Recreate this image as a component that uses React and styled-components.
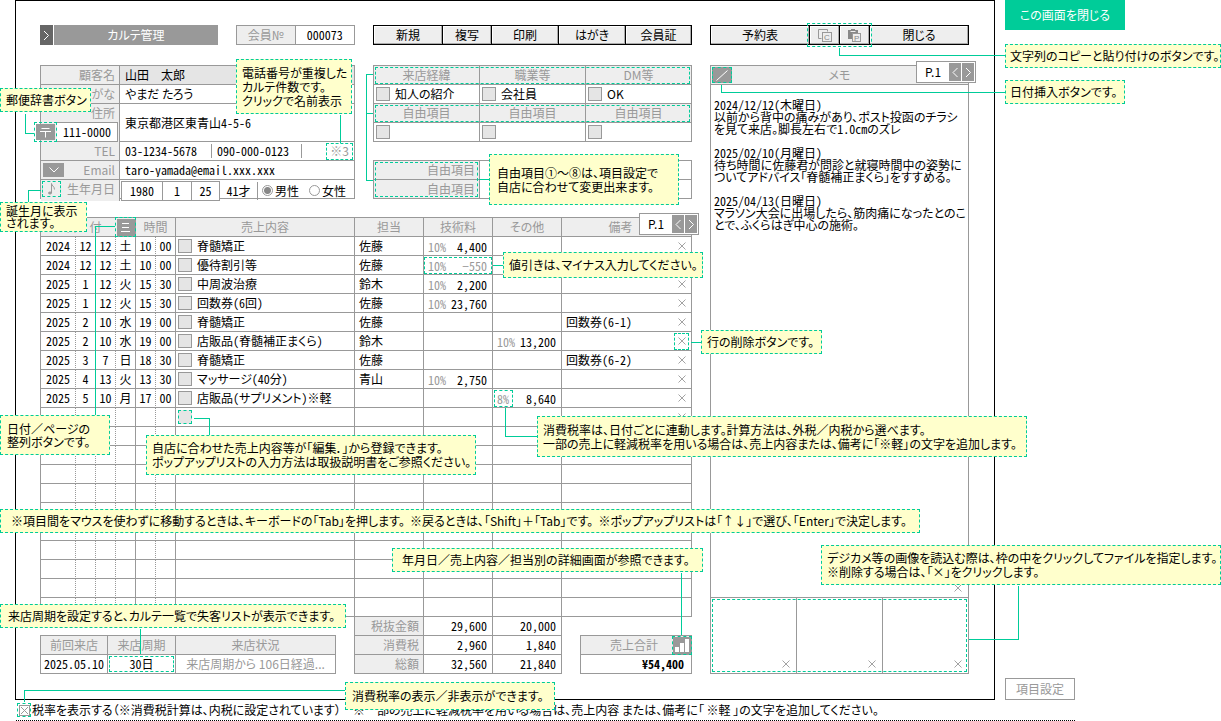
import React from 'react';
import styled, { createGlobalStyle, css } from 'styled-components';

const GlobalStyle = createGlobalStyle`
  :root{
    --line:#999999;
    --label:#eeeeee;
    --fill:#e5e5e5;
    --mark:#00cc99;
    --note:#ffffcc;
  }

  *{
    box-sizing:border-box;
  }

  body{
    margin:0;
    background:#fff;
  }

  body, button, input, textarea{
    color:#000;
    font-family:"Noto Sans CJK JP", "Liberation Sans", sans-serif;
    font-size:12px;
    line-height:14px;
    font-feature-settings:"palt" 1;
  }

  button, input, textarea{
    margin:0;
    padding:0;
    border:none;
    border-radius:0;
    background:none;
    outline:none;
  }

  button{
    cursor:pointer;
  }
`;

/* half width figures, so that columns of numbers line up */
const figures = css`
  font-feature-settings:"palt" 1, "hwid" 1;
`;

/* page */

const Page = styled.div`
  display:grid;
  grid-template-columns:minmax(0, 1fr) 216px;
  column-gap:10px;
  padding-left:15px;
`;

const Frame = styled.main`
  display:grid;
  grid-template-columns:minmax(0, 652fr) minmax(0, 259fr);
  column-gap:18px;
  padding:24px 25px 25px 24px;
  border:1px solid #000;
`;

const Column = styled.div`
  display:flex;
  flex-direction:column;
`;

const Pair = styled.div`
  display:grid;
  grid-template-columns:minmax(0, 315fr) minmax(0, 319fr);
  column-gap:18px;
  margin-bottom:${(p) => p.$gap}px;
`;

const Side = styled.aside`
  display:flex;
  flex-direction:column;
  align-items:flex-start;
`;

/* notes laid over the form */

const NoteBox = styled.div`
  display:flex;
  align-items:center;
  width:${(p) => p.$width}px;
  min-height:24px;
  padding:${(p) => p.$pad || '4px 6px'};
  border:1px dashed var(--mark);
  background-color:var(--note);
  line-height:${(p) => p.$leading || 14}px;
  white-space:pre;
`;

const at = css`
  position:absolute;
  z-index:3;
  top:${(p) => p.$top}px;
  ${(p) => (p.$right !== undefined ? `right:${p.$right}px;` : `left:${p.$left}px;`)}
`;

const FloatingBox = styled(NoteBox)`
  ${at}
  height:${(p) => p.$height}px;
`;

const Wide = styled.span`
  font-feature-settings:normal;
`;

const Wire = styled.span`
  ${at}
  z-index:2;
  width:${(p) => p.$w || 1}px;
  height:${(p) => p.$h || 1}px;
  border:0 solid var(--mark);
  ${(p) => p.$sides.split(' ').map((side) => `border-${side}-width:1px;`).join('')}
  pointer-events:none;
`;

const Spot = styled.span`
  position:absolute;
  z-index:1;
  inset:${(p) => p.$inset || '1px'};
  border:1px dashed var(--mark);
  pointer-events:none;
`;

/* header */

const TitleBar = styled.div`
  display:flex;
  height:20px;
`;

const OpenButton = styled.button`
  display:grid;
  place-items:center;
  width:13px;
  margin-right:1px;
  background-color:#666;
`;

const Title = styled.h1`
  flex:1;
  margin:0 18px 0 0;
  background-color:#999;
  color:#fff;
  font-size:12px;
  font-weight:400;
  line-height:20px;
  text-align:center;
`;

const MemberNo = styled.label`
  display:grid;
  grid-template-columns:1fr 1fr;
  width:119px;
  border:1px solid var(--line);
  line-height:18px;
  text-align:center;

  span{
    border-right:1px solid var(--line);
    background-color:var(--label);
    color:#999;
  }

  input{
    ${figures}
    width:100%;
    text-align:center;
  }
`;

const Toolbar = styled.div`
  position:relative;
  display:grid;
  grid-template-columns:${(p) => p.$cols};
  height:20px;
  border:1px solid #000;
`;

const ToolButton = styled.button`
  display:grid;
  place-items:center;
  background-color:var(--label);
  box-shadow:inset -1px -1px 0 #aaa, inset 1px 1px 0 #fff;

  & + &{
    border-left:1px solid #000;
  }
`;

/* customer form */

const Form = styled.form`
  position:relative;
  border:1px solid var(--line);
  border-bottom:none;
`;

const Row = styled.div`
  display:grid;
  grid-template-columns:79px minmax(0, 1fr);
  height:${(p) => (p.$tall ? 38 : 19)}px;
  border-bottom:1px solid var(--line);
`;

const Label = styled.div`
  position:relative;
  padding-right:4px;
  border-right:1px solid var(--line);
  background-color:var(--label);
  color:#999;
  line-height:18px;
  text-align:right;
`;

const Field = styled.div`
  position:relative;
  display:flex;
  align-items:center;
  background-color:${(p) => (p.$filled ? 'var(--fill)' : 'transparent')};
`;

const TextBox = styled.input`
  width:${(p) => (p.$width ? `${p.$width}px` : '100%')};
  height:14px;
  padding-left:5px;
  border-right:${(p) => (p.$ruled ? '1px solid var(--line)' : 'none')};
  ${(p) => p.$figures && figures}
`;

const ZipBox = styled.div`
  display:flex;
  height:20px;
  margin:0 -3px 0 -7px;

  input{
    ${figures}
    flex:1;
    min-width:0;
    border:1px solid var(--line);
    border-left:none;
    background-color:#fff;
    text-align:center;
  }
`;

const ZipButton = styled.button`
  display:grid;
  place-items:center;
  width:23px;
  height:20px;
  padding:1px;
  border:1px dashed var(--mark);
  background-color:#999;
  background-clip:content-box;
`;

const IconButton = styled.button`
  display:grid;
  place-items:center;
  flex:none;
  width:${(p) => p.$width}px;
  height:${(p) => p.$height}px;
  margin:${(p) => p.$margin || 0};
  background-color:${(p) => (p.$plain ? 'transparent' : '#999')};
  color:${(p) => (p.$plain ? '#999' : '#fff')};
`;

const Corner = styled.div`
  position:absolute;
  top:1px;
  left:1px;
  display:flex;
`;

const Duplicate = styled.button`
  position:relative;
  width:27px;
  height:17px;
  margin:0 1px 0 auto;
  color:#999;
`;

const Birthday = styled.div`
  position:relative;
  z-index:1;
  align-self:flex-start;
  display:grid;
  grid-template-columns:40px 29px 28px;
  flex:none;
  height:20px;
  margin:1px 0 0 1px;
  border:1px solid var(--line);
  background-color:#fff;

  input{
    ${figures}
    width:100%;
    min-width:0;
    text-align:center;
  }

  input + input{
    border-left:1px solid var(--line);
  }
`;

const Age = styled.span`
  ${figures}
  width:38px;
  height:18px;
  border-right:1px solid var(--line);
  line-height:17px;
  text-align:center;
`;

const Radio = styled.label`
  display:flex;
  align-items:center;
  gap:2px;
  margin-left:${(p) => p.$gap}px;
  white-space:nowrap;

  input{
    appearance:none;
    width:11px;
    height:11px;
    border:1px solid #999;
    border-radius:50%;
  }

  input:checked{
    background:radial-gradient(circle, #888 3px, #fff 4px);
  }
`;

/* free items */

const Stack = styled.div`
  position:relative;
  display:flex;
  flex-direction:column;
  justify-content:space-between;
`;

const Table = styled.table`
  width:100%;
  border:solid var(--line);
  border-width:${(p) => (p.$joined ? '0 0 0 1px' : '1px 0 0 1px')};
  border-spacing:0;
  table-layout:fixed;
  ${(p) => p.$figures && figures}

  tr{
    height:19px;
  }

  th, td{
    height:19px;
    padding:0;
    border:solid var(--line);
    border-width:0 1px 1px 0;
    line-height:18px;
    white-space:nowrap;
  }

  th{
    background-color:var(--label);
    color:#999;
    font-weight:400;
  }
`;

const Spotted = styled.div`
  position:relative;
`;

const Choice = styled.div`
  display:flex;
  align-items:center;
  gap:5px;
  height:18px;
  padding-left:2px;
`;

const PopupButton = styled.button`
  flex:none;
  width:14px;
  height:14px;
  border:1px ${(p) => (p.$marked ? 'dashed var(--mark)' : 'solid var(--line)')};
  background-color:var(--fill);
`;

const RightTh = styled.th`
  padding-right:4px !important;
  text-align:right;
`;

/* ledger */

const Ledger = styled.section`
  position:relative;
`;

const Cell = styled.td`
  text-align:${(p) => p.$align || 'center'};
  border-right-style:${(p) => (p.$dotted ? 'dotted' : 'solid')} !important;
`;

const SortTh = styled.th`
  position:relative;

  button{
    margin:auto;
  }
`;

const DateTh = styled.th`
  padding-left:10px !important;
  border-right:none !important;
  font-feature-settings:normal;
`;

const RemarkTh = styled.th`
  padding-right:12px !important;
`;

const Indent = styled.span`
  padding-left:4px;
`;

const Amount = styled.div`
  display:flex;
  justify-content:space-between;
  height:17px;
  padding:0 4px 0 3px;
  border:1px dashed ${(p) => (p.$marked ? 'var(--mark)' : 'transparent')};
  color:${(p) => (p.$marked ? '#999' : '#000')};
  line-height:15px;
`;

const Rate = styled.span`
  position:relative;
  color:#999;
`;

const Remark = styled.div`
  position:relative;
  display:flex;
  align-items:center;
  justify-content:space-between;
  height:18px;
  padding:0 5px 0 4px;
`;

const Delete = styled.button`
  position:relative;
  display:grid;
  place-items:center;
  width:9px;
  height:9px;
  margin-left:auto;
`;

const PagerBox = styled.nav`
  ${at}
  z-index:2;
  display:flex;
  gap:1px;
  width:60px;
  height:22px;
  padding:1px;
  border:1px solid var(--line);
  background-color:#fff;
  color:#000;
  line-height:18px;
  text-align:center;

  span{
    flex:1;
  }

  button{
    display:grid;
    place-items:center;
    width:12px;
    background-color:#999;
  }
`;

const Summary = styled.section`
  position:relative;
  display:grid;
  grid-template-columns:minmax(0, 1fr) 208px 112px;
  column-gap:18px;
  align-items:end;
`;

const Figure = styled.td`
  padding-right:${(p) => (p.$total ? 7 : 5)}px !important;
  font-weight:${(p) => (p.$total ? 700 : 400)};
  text-align:right;
`;

const Centered = styled.td`
  position:relative;
  text-align:center;

  input{
    ${figures}
    width:100%;
    text-align:center;
  }
`;

const Status = styled(Centered)`
  color:#999;
  font-feature-settings:"palt" 1;
`;

const TotalHead = styled.div`
  display:flex;
  align-items:center;
  height:18px;
  padding-left:14px;

  span:first-child{
    flex:1;
  }
`;

const ChartButton = styled(IconButton)`
  position:relative;
`;

/* memo */

const Memo = styled.section`
  position:relative;
  display:flex;
  flex:1;
  flex-direction:column;
  margin-top:20px;
  border:1px solid var(--line);
`;

const MemoHead = styled.div`
  position:relative;
  height:19px;
  border-bottom:1px solid var(--line);
  background-color:var(--label);
  color:#999;
  line-height:18px;
  text-align:center;
`;

const MemoText = styled.textarea`
  ${figures}
  flex:1;
  padding:14px 0 0 3px;
  line-height:12px;
  white-space:pre;
  overflow:hidden;
  resize:none;
`;

const MemoFoot = styled.div`
  display:flex;
  align-items:center;
  height:19px;
  padding-right:6px;
  border-bottom:1px solid var(--line);
`;

const Photos = styled.div`
  position:relative;
  display:grid;
  grid-template-columns:minmax(0, 85fr) minmax(0, 86fr) minmax(0, 86fr);
  height:75px;
`;

const Photo = styled.div`
  display:flex;
  align-items:flex-end;
  padding:0 6px 5px 0;

  & + &{
    border-left:1px solid var(--line);
  }
`;

/* right side and footer */

const CloseScreen = styled.button`
  width:120px;
  height:30px;
  margin-bottom:14px;
  background-color:var(--mark);
  color:#fff;
`;

const SideNotes = styled.div`
  display:flex;
  flex-direction:column;
  gap:12px;
`;

const Settings = styled.button`
  width:70px;
  height:22px;
  margin-top:auto;
  border:1px solid var(--line);
  color:#999;
`;

const Footer = styled.footer`
  position:relative;
  display:flex;
  align-items:center;
  height:21px;
  margin:0 146px 0 16px;
  border-bottom:1px dotted #000;

  label{
    display:flex;
    align-items:center;
    gap:1px;
    padding-left:1px;
    white-space:pre;
  }
`;

const TaxCheck = styled.span`
  position:relative;
  display:grid;
  place-items:center;
  width:14px;
  height:14px;
  border:1px dashed var(--mark);

  input{
    position:absolute;
    inset:0;
    width:100%;
    height:100%;
    opacity:0;
  }
`;

/* drawings */

const Arrow = ({ back, color = '#fff' }) => (
  <svg width="7" height="11" viewBox="0 0 7 11" fill="none" stroke={color}>
    <path d={back ? 'M5.5 1 1 5.5 5.5 10' : 'M1 1 5.5 5.5 1 10'} />
  </svg>
);

const Cross = () => (
  <svg width="8" height="8" viewBox="0 0 8 8" stroke="#999" strokeWidth="0.9">
    <path d="M.5 .5 7.5 7.5M7.5 .5 .5 7.5" />
  </svg>
);

const CopyIcon = () => (
  <svg width="14" height="13" viewBox="0 0 14 13" fill="none" stroke="#999">
    <path d="M3.5 9.5h-3v-9h9v2" />
    <rect x="4.5" y="3.5" width="9" height="9" fill="#eee" />
    <text x="6" y="11" fontSize="8" fill="#888" stroke="none" fontFamily="Liberation Sans">C</text>
  </svg>
);

const PasteIcon = () => (
  <svg width="14" height="13" viewBox="0 0 14 13" fill="none" stroke="#999">
    <path d="M0 1h3v-1h4v1h3v9H0z" fill="#888" stroke="none" />
    <path d="M2.5 2.5h5" stroke="#eee" />
    <rect x="4.5" y="4.5" width="8" height="8" fill="#eee" />
    <text x="6" y="12" fontSize="8" fill="#888" stroke="none" fontFamily="Liberation Sans">P</text>
  </svg>
);

const PostMark = () => (
  <svg width="11" height="11" viewBox="0 0 11 11" stroke="#fff">
    <path d="M1.5 1.5h8M0 4.5h11M5.5 4.5v6" />
  </svg>
);

const DownMark = () => (
  <svg width="10" height="6" viewBox="0 0 10 6" fill="none" stroke="#fff">
    <path d="M.5 .5 5 5 9.5 .5" />
  </svg>
);

const NoteMark = () => (
  <svg width="8" height="12" viewBox="0 0 8 12" fill="none" stroke="#999">
    <path d="M3.5 10V.5C3.5 3 6.5 3 6.5 6.5" />
    <ellipse cx="2" cy="10" rx="1.5" ry="1" fill="#999" />
  </svg>
);

const ListMark = () => (
  <svg width="9" height="9" viewBox="0 0 9 9" stroke="#fff">
    <path d="M1 .5h7M1 4.5h7M0 8.5h9" />
  </svg>
);

const PenMark = () => (
  <svg width="12" height="11" viewBox="0 0 12 11" stroke="#fff">
    <path d="M.5 10.5 11.5 .5" />
  </svg>
);

const ChartMark = () => (
  <svg width="14" height="13" viewBox="0 0 14 13" fill="#fff">
    <path d="M0 8h4v5H0zM5 4h4v9H5zM10 0h4v13h-4z" />
  </svg>
);

const BoxCross = () => (
  <svg width="11" height="11" viewBox="0 0 11 11" fill="none" stroke="#999">
    <rect x=".5" y=".5" width="10" height="10" />
    <path d="M2 2 9 9M9 2 2 9" />
  </svg>
);

/* data */

const sales = [
  ['2024', '12', '12', '土', '10', '00', '脊髄矯正', '佐藤', ['10%', '4,400'], null, ''],
  ['2024', '12', '12', '土', '10', '00', '優待割引等', '佐藤', ['10%', '−550', 'all'], null, ''],
  ['2025', '1', '12', '火', '15', '30', '中周波治療', '鈴木', ['10%', '2,200'], null, ''],
  ['2025', '1', '12', '火', '15', '30', '回数券（6回）', '佐藤', ['10%', '23,760'], null, ''],
  ['2025', '2', '10', '水', '19', '00', '脊髄矯正', '佐藤', null, null, '回数券（6-1）'],
  ['2025', '2', '10', '水', '19', '00', '店販品（脊髄補正まくら）', '鈴木', null, ['10%', '13,200'], '', true],
  ['2025', '3', '7', '日', '18', '30', '脊髄矯正', '佐藤', null, null, '回数券（6-2）'],
  ['2025', '4', '13', '火', '13', '30', 'マッサージ（40分）', '青山', ['10%', '2,750'], null, ''],
  ['2025', '5', '10', '月', '17', '00', '店販品（サプリメント）※軽', '', null, ['8%', '8,640', 'rate'], ''],
];

const emptyRows = Array.from({ length: 11 }, (_, i) => i);

const columns = [35, 20, 20, 20, 20, 20, null, 69, 69, 69, 130];

const memo = `2024/12/12（木曜日）
以前から背中の痛みがあり、ポスト投函のチラシ
を見て来店。脚長左右で1.0cmのズレ

2025/02/10（月曜日）
待ち時間に佐藤君が問診と就寝時間中の姿勢に
ついてアドバイス「脊髄補正まくら」をすすめる。

2025/04/13（日曜日）
マラソン大会に出場したら、筋肉痛になったとのこ
とで、ふくらはぎ中心の施術。`;

// slash and wave keep their full width inside a note
const NoteText = ({ children }) => (
  <span>
    {children.split(/([／～])/).map((part, i) => (i % 2 ? <Wide key={i}>{part}</Wide> : part))}
  </span>
);

const Note = ({ children, ...rest }) => (
  <NoteBox {...rest}><NoteText>{children}</NoteText></NoteBox>
);

const FloatingNote = ({ children, ...rest }) => (
  <FloatingBox {...rest}><NoteText>{children}</NoteText></FloatingBox>
);

const Pager = (props) => (
  <PagerBox {...props}>
    <span>P.1</span>
    <button aria-label="前のページ"><Arrow back /></button>
    <button aria-label="次のページ"><Arrow /></button>
  </PagerBox>
);

const Price = ({ value }) =>
  value && (
    <Amount $marked={value[2] === 'all'}>
      <Rate>
        {value[0]}
        {value[2] === 'rate' && <Spot $inset="-1px -4px -1px -3px" />}
      </Rate>
      <span>{value[1]}</span>
    </Amount>
  );

function CustomerForm() {
  return (
    <Form>
      <Row>
        <Label as="label" htmlFor="name">顧客名</Label>
        <Field $filled><TextBox id="name" defaultValue="山田　太郎" /></Field>
      </Row>
      <Row>
        <Label as="label" htmlFor="kana">ふりがな</Label>
        <Field><TextBox id="kana" defaultValue="やまだ たろう" /></Field>
      </Row>
      <Row $tall>
        <Label>
          <label htmlFor="address">住所</label>
          <ZipBox>
            <ZipButton type="button" aria-label="郵便辞書"><PostMark /></ZipButton>
            <input aria-label="郵便番号" defaultValue="111-0000" />
          </ZipBox>
        </Label>
        <Field><TextBox id="address" $figures defaultValue="東京都港区東青山4-5-6" /></Field>
      </Row>
      <Row>
        <Label as="label" htmlFor="tel">TEL</Label>
        <Field>
          <TextBox id="tel" $figures $width={92} $ruled defaultValue="03-1234-5678" />
          <TextBox aria-label="携帯" $figures $width={90} $ruled defaultValue="090-000-0123" />
          <Duplicate type="button">※3<Spot $inset="0" /></Duplicate>
        </Field>
      </Row>
      <Row>
        <Label>
          <Corner>
            <IconButton type="button" aria-label="メール" $width={21} $height={14} $margin="1px"><DownMark /></IconButton>
          </Corner>
          <label htmlFor="email">Email</label>
        </Label>
        <Field><TextBox id="email" $figures defaultValue="taro-yamada@email.xxx.xxx" /></Field>
      </Row>
      <Row>
        <Label>
          <Corner>
            <IconButton type="button" aria-label="誕生月" $plain $width={19} $height={16}><NoteMark /></IconButton>
            <Spot $inset="0" />
          </Corner>
          生年月日
        </Label>
        <Field>
          <Birthday>
            <input aria-label="年" defaultValue="1980" />
            <input aria-label="月" defaultValue="1" />
            <input aria-label="日" defaultValue="25" />
          </Birthday>
          <Age>41才</Age>
          <Radio $gap={4}><input type="radio" name="sex" defaultChecked />男性</Radio>
          <Radio $gap={10}><input type="radio" name="sex" />女性</Radio>
        </Field>
      </Row>

      <FloatingNote $left={-41} $top={22} $width={91} $height={24} $pad="4px 5px">郵便辞書ボタン</FloatingNote>
      <Wire $left={-16} $top={48} $w={9} $h={20} $sides="left bottom" />
      <FloatingNote $right={2} $top={-7} $width={116} $height={55} $pad="4px 5px">
        {'電話番号が重複した\nカルテ件数です。\nクリックで名前表示'}
      </FloatingNote>
      <Wire $right={13} $top={49} $h={28} $sides="left" />
      <FloatingNote $left={-41} $top={136} $width={87} $height={30} $leading={12} $pad="4px 5px">
        {'誕生月に表示\nされます。'}
      </FloatingNote>
      <Wire $left={-13} $top={124} $w={13} $h={12} $sides="left top" />
    </Form>
  );
}

function FreeItems() {
  return (
    <Stack>
      <Spotted>
        <Table>
          <tbody>
            <tr><th>来店経緯</th><th>職業等</th><th>DM等</th></tr>
            <tr>
              {['知人の紹介', '会社員', 'OK'].map((text) => (
                <td key={text}><Choice><PopupButton aria-label="選択" />{text}</Choice></td>
              ))}
            </tr>
            <tr><th>自由項目</th><th>自由項目</th><th>自由項目</th></tr>
            <tr>
              {[1, 2, 3].map((n) => (
                <td key={n}><Choice><PopupButton aria-label="選択" /></Choice></td>
              ))}
            </tr>
          </tbody>
        </Table>
        <Spot $inset="2px 2px 58px 2px" />
        <Spot $inset="40px 2px 20px 2px" />
      </Spotted>
      <Spotted>
        <Table>
          <colgroup><col width="106" /><col /></colgroup>
          <tbody>
            <tr><RightTh>自由項目</RightTh><td /></tr>
            <tr><RightTh>自由項目</RightTh><td /></tr>
          </tbody>
        </Table>
        <Spot $inset="2px 214px 2px 2px" />
      </Spotted>
      <Wire $left={-7} $top={9} $w={7} $h={107} $sides="left top bottom" />
      <Wire $left={-7} $top={48} $w={7} $sides="top" />
      <Wire $left={106} $top={114} $w={10} $sides="top" />
      <FloatingNote $right={13} $top={89} $width={190} $height={51} $pad="4px 7px">
        {'自由項目①～⑧は、項目設定で\n自店に合わせて変更出来ます。'}
      </FloatingNote>
    </Stack>
  );
}

function SalesLedger() {
  return (
    <Ledger>
      <Table $figures>
        <colgroup>
          {columns.map((w, i) => <col key={i} width={w || undefined} />)}
        </colgroup>
        <thead>
          <tr>
            <DateTh colSpan={3}>日　付</DateTh>
            <SortTh>
              <IconButton aria-label="整列" $width={18} $height={17}><ListMark /></IconButton>
              <Spot $inset="-1px" />
            </SortTh>
            <th colSpan={2}>時間</th>
            <th>売上内容</th>
            <th>担当</th>
            <th>技術料</th>
            <th>その他</th>
            <RemarkTh>備考</RemarkTh>
          </tr>
        </thead>
        <tbody>
          {sales.map((row, i) => (
            <tr key={i}>
              <Cell $dotted>{row[0]}</Cell>
              <Cell $dotted>{row[1]}</Cell>
              <Cell $dotted>{row[2]}</Cell>
              <Cell>{row[3]}</Cell>
              <Cell $dotted>{row[4]}</Cell>
              <Cell>{row[5]}</Cell>
              <Cell $align="left"><Choice><PopupButton aria-label="売上内容" />{row[6]}</Choice></Cell>
              <Cell $align="left"><Indent>{row[7]}</Indent></Cell>
              <Cell><Price value={row[8]} /></Cell>
              <Cell><Price value={row[9]} /></Cell>
              <Cell>
                <Remark>
                  {row[10]}
                  <Delete aria-label="行の削除">
                    <Cross />
                    {row[11] && <Spot $inset="-4px -3px" />}
                  </Delete>
                </Remark>
              </Cell>
            </tr>
          ))}
          {emptyRows.map((n) => (
            <tr key={n}>
              <Cell $dotted /><Cell $dotted /><Cell $dotted /><Cell />
              <Cell $dotted /><Cell />
              <Cell>{n === 0 && <Choice><PopupButton $marked aria-label="売上内容" /></Choice>}</Cell>
              <Cell /><Cell /><Cell />
              <Cell>{n === 0 && <Remark><Delete aria-label="行の削除"><Cross /></Delete></Remark>}</Cell>
            </tr>
          ))}
        </tbody>
      </Table>
      <Pager $top={-4} $right={-7} />

      <Wire $left={55} $top={9} $w={20} $h={189} $sides="left top" />
      <FloatingNote $left={-40} $top={198} $width={110} $height={40} $leading={13}>
        {'日付／ページの\n整列ボタンです。'}
      </FloatingNote>
      <Wire $left={154} $top={201} $w={16} $h={17} $sides="top right" />
      <FloatingNote $left={106} $top={218} $width={330} $height={40} $pad="4px 5px">
        {'自店に合わせた売上内容等が「編集．」から登録できます。\nポップアップリストの入力方法は取扱説明書をご参照ください。'}
      </FloatingNote>
      <Wire $right={189} $top={48} $w={10} $sides="top" />
      <FloatingNote $right={-11} $top={35} $width={200} $height={26} $pad="4px 5px">値引きは、マイナス入力してください。</FloatingNote>
      <Wire $right={-9} $top={125} $w={10} $sides="top" />
      <FloatingNote $right={-130} $top={113} $width={121} $height={24} $pad="4px 5px">行の削除ボタンです。</FloatingNote>
      <Wire $right={155} $top={191} $w={32} $h={29} $sides="left bottom" />
      <FloatingNote $right={-335} $top={199} $width={490} $height={41} $pad="4px 5px">
        {'消費税率は、日付ごとに連動します。計算方法は、外税／内税から選べます。\n一部の売上に軽減税率を用いる場合は、売上内容または、備考に「※軽」の文字を追加します。'}
      </FloatingNote>
      <FloatingNote $left={-40} $top={292} $width={920} $height={24} $pad="4px 10px">
        {'※項目間をマウスを使わずに移動するときは、キーボードの「Tab」を押します。  ※戻るときは、「Shift」＋「Tab」です。  ※ポップアップリストは「↑↓」で選び、「Enter」で決定します。'}
      </FloatingNote>
      <FloatingNote $right={-11} $top={331} $width={311} $height={24} $pad="4px 9px">
        年月日／売上内容／担当別の詳細画面が参照できます。
      </FloatingNote>
      <Wire $right={10} $top={356} $h={62} $sides="left" />
    </Ledger>
  );
}

function SalesSummary() {
  return (
    <Summary>
      <Table $figures>
        <colgroup><col width="67" /><col width="68" /><col /></colgroup>
        <tbody>
          <tr><th>前回来店</th><th>来店周期</th><th>来店状況</th></tr>
          <tr>
            <Centered>2025.05.10</Centered>
            <Centered>
              <input aria-label="来店周期" defaultValue="30日" />
              <Spot />
            </Centered>
            <Status>来店周期から 106日経過...</Status>
          </tr>
        </tbody>
      </Table>
      <Table $joined $figures>
        <tbody>
          <tr><RightTh>税抜金額</RightTh><Figure>29,600</Figure><Figure>20,000</Figure></tr>
          <tr><RightTh>消費税</RightTh><Figure>2,960</Figure><Figure>1,840</Figure></tr>
          <tr><RightTh>総額</RightTh><Figure>32,560</Figure><Figure>21,840</Figure></tr>
        </tbody>
      </Table>
      <Table $figures>
        <tbody>
          <tr>
            <th>
              <TotalHead>
                <span>売上合計</span>
                <ChartButton aria-label="売上詳細" $width={18} $height={17}>
                  <ChartMark />
                  <Spot $inset="-1px" />
                </ChartButton>
              </TotalHead>
            </th>
          </tr>
          <tr><Figure $total>¥54,400</Figure></tr>
        </tbody>
      </Table>
      <FloatingNote $left={-40} $top={-13} $width={346} $height={24} $pad="4px 7px">
        来店周期を設定すると、カルテ一覧で失客リストが表示できます。
      </FloatingNote>
      <Wire $left={100} $top={12} $h={25} $sides="left" />
    </Summary>
  );
}

function App() {
  return (
    <>
      <GlobalStyle />
      <Page>
        <Frame>
          <Column>
            <Pair $gap={20}>
              <TitleBar>
                <OpenButton aria-label="開く"><Arrow /></OpenButton>
                <Title>カルテ管理</Title>
                <MemberNo><span>会員№</span><input defaultValue="000073" /></MemberNo>
              </TitleBar>
              <Toolbar $cols="68fr 49fr 67fr 67fr 66fr">
                {['新規', '複写', '印刷', 'はがき', '会員証'].map((name) => (
                  <ToolButton key={name}>{name}</ToolButton>
                ))}
              </Toolbar>
            </Pair>
            <Pair $gap={18}>
              <CustomerForm />
              <FreeItems />
            </Pair>
            <SalesLedger />
            <SalesSummary />
          </Column>

          <Column>
            <Toolbar $cols="98fr 30px 30px 99fr">
              <ToolButton>予約表</ToolButton>
              <ToolButton aria-label="コピー"><CopyIcon /></ToolButton>
              <ToolButton aria-label="貼り付け"><PasteIcon /></ToolButton>
              <ToolButton>閉じる</ToolButton>
              <Spot $inset="-3px 96px" />
              <Wire $left={128} $top={22} $w={167} $h={8} $sides="left bottom" />
            </Toolbar>
            <Memo>
              <MemoHead>
                <Corner>
                  <IconButton aria-label="日付挿入" $width={20} $height={16}><PenMark /></IconButton>
                  <Spot $inset="0" />
                </Corner>
                <label htmlFor="memo">メモ</label>
                <Wire $left={10} $top={19} $w={284} $h={8} $sides="left bottom" />
              </MemoHead>
              <Pager $top={-5} $right={-8} />
              <MemoText id="memo" defaultValue={memo} />
              <MemoFoot><Delete aria-label="画像の削除"><Cross /></Delete></MemoFoot>
              <Photos>
                {[1, 2, 3].map((n) => (
                  <Photo key={n}><Delete aria-label="画像の削除"><Cross /></Delete></Photo>
                ))}
                <Spot />
              </Photos>
              <FloatingNote $right={-253} $top={479} $width={400} $height={40} $pad="4px 5px">
                {'デジカメ等の画像を読込む際は、枠の中をクリックしてファイルを指定します。\n※削除する場合は、「×」をクリックします。'}
              </FloatingNote>
              <Wire $right={-51} $top={520} $w={50} $h={54} $sides="right bottom" />
            </Memo>
          </Column>
        </Frame>

        <Side>
          <CloseScreen>この画面を閉じる</CloseScreen>
          <SideNotes>
            <Note $width={216} $pad="4px">文字列のコピーと貼り付けのボタンです。</Note>
            <Note $width={120} $pad="4px">日付挿入ボタンです。</Note>
          </SideNotes>
          <Settings>項目設定</Settings>
        </Side>
      </Page>

      <Footer>
        <label>
          <TaxCheck><input type="checkbox" defaultChecked /><BoxCross /></TaxCheck>
          税率を表示する（※消費税計算は、内税に設定されています）　※一部の売上に軽減税率を用いる場合は、売上内容 または、備考に「 ※軽 」の文字を追加してください。
        </label>
        <Wire $left={8} $top={-10} $w={321} $h={12} $sides="left top" />
        <FloatingNote $left={329} $top={-18} $width={210} $height={28}>消費税率の表示／非表示ができます。</FloatingNote>
      </Footer>
    </>
  );
}

export default App;
